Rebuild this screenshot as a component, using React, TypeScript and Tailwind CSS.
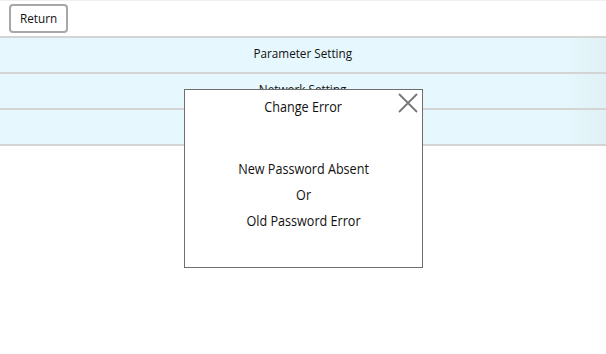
const rows = ['Parameter Setting', 'Network Setting', 'Password Setting'];

export default function App() {
    return (
        <div className="relative w-[606px] h-[354px] bg-white overflow-hidden text-[#111]" style={{ fontFamily: '"Open Sans", "Noto Sans", sans-serif' }}>
            {/* top bar */}
            <div className="h-[36px] flex items-center pl-[9px] border-t border-[#eef0f2]">
                <button className="w-[59px] h-[29px] border-2 border-[#a8a8a8] rounded-[4px] bg-white text-[13px] flex items-center justify-center">
                    <span className="inline-block scale-x-90">Return</span>
                </button>
            </div>

            {/* setting rows */}
            <div className="flex flex-col border-b-2 border-[#d4d4d4]">
                {rows.map((r) => (
                    <div
                        key={r}
                        className="h-[36px] border-t-2 border-[#d4d4d4] bg-gradient-to-r from-[#e6f8fd] via-[#e6f8fd] via-93% to-[#e0f1f5] flex items-center justify-center text-[13px]"
                    >
                        <span className="inline-block scale-x-90 -translate-y-px">{r}</span>
                    </div>
                ))}
            </div>

            {/* error dialog */}
            <div className="absolute left-[184px] top-[89px] w-[239px] h-[179px] bg-white border border-[#6e6e6e] flex flex-col items-center">
                <div className="mt-[7px] text-[14px] leading-[20px] scale-x-90">Change Error</div>
                <button className="absolute right-[4px] top-[3px] text-[#777]">
                    <svg width="20" height="20" viewBox="0 0 20 20" fill="none" stroke="currentColor" strokeWidth="1.8">
                        <path d="M1 1L19 19M19 1L1 19" />
                    </svg>
                </button>
                <div className="mt-[42px] flex flex-col items-center gap-[6px] text-[14px] leading-[20px] scale-x-90">
                    <div>New Password Absent</div>
                    <div>Or</div>
                    <div>Old Password Error</div>
                </div>
            </div>
        </div>
    );
}
